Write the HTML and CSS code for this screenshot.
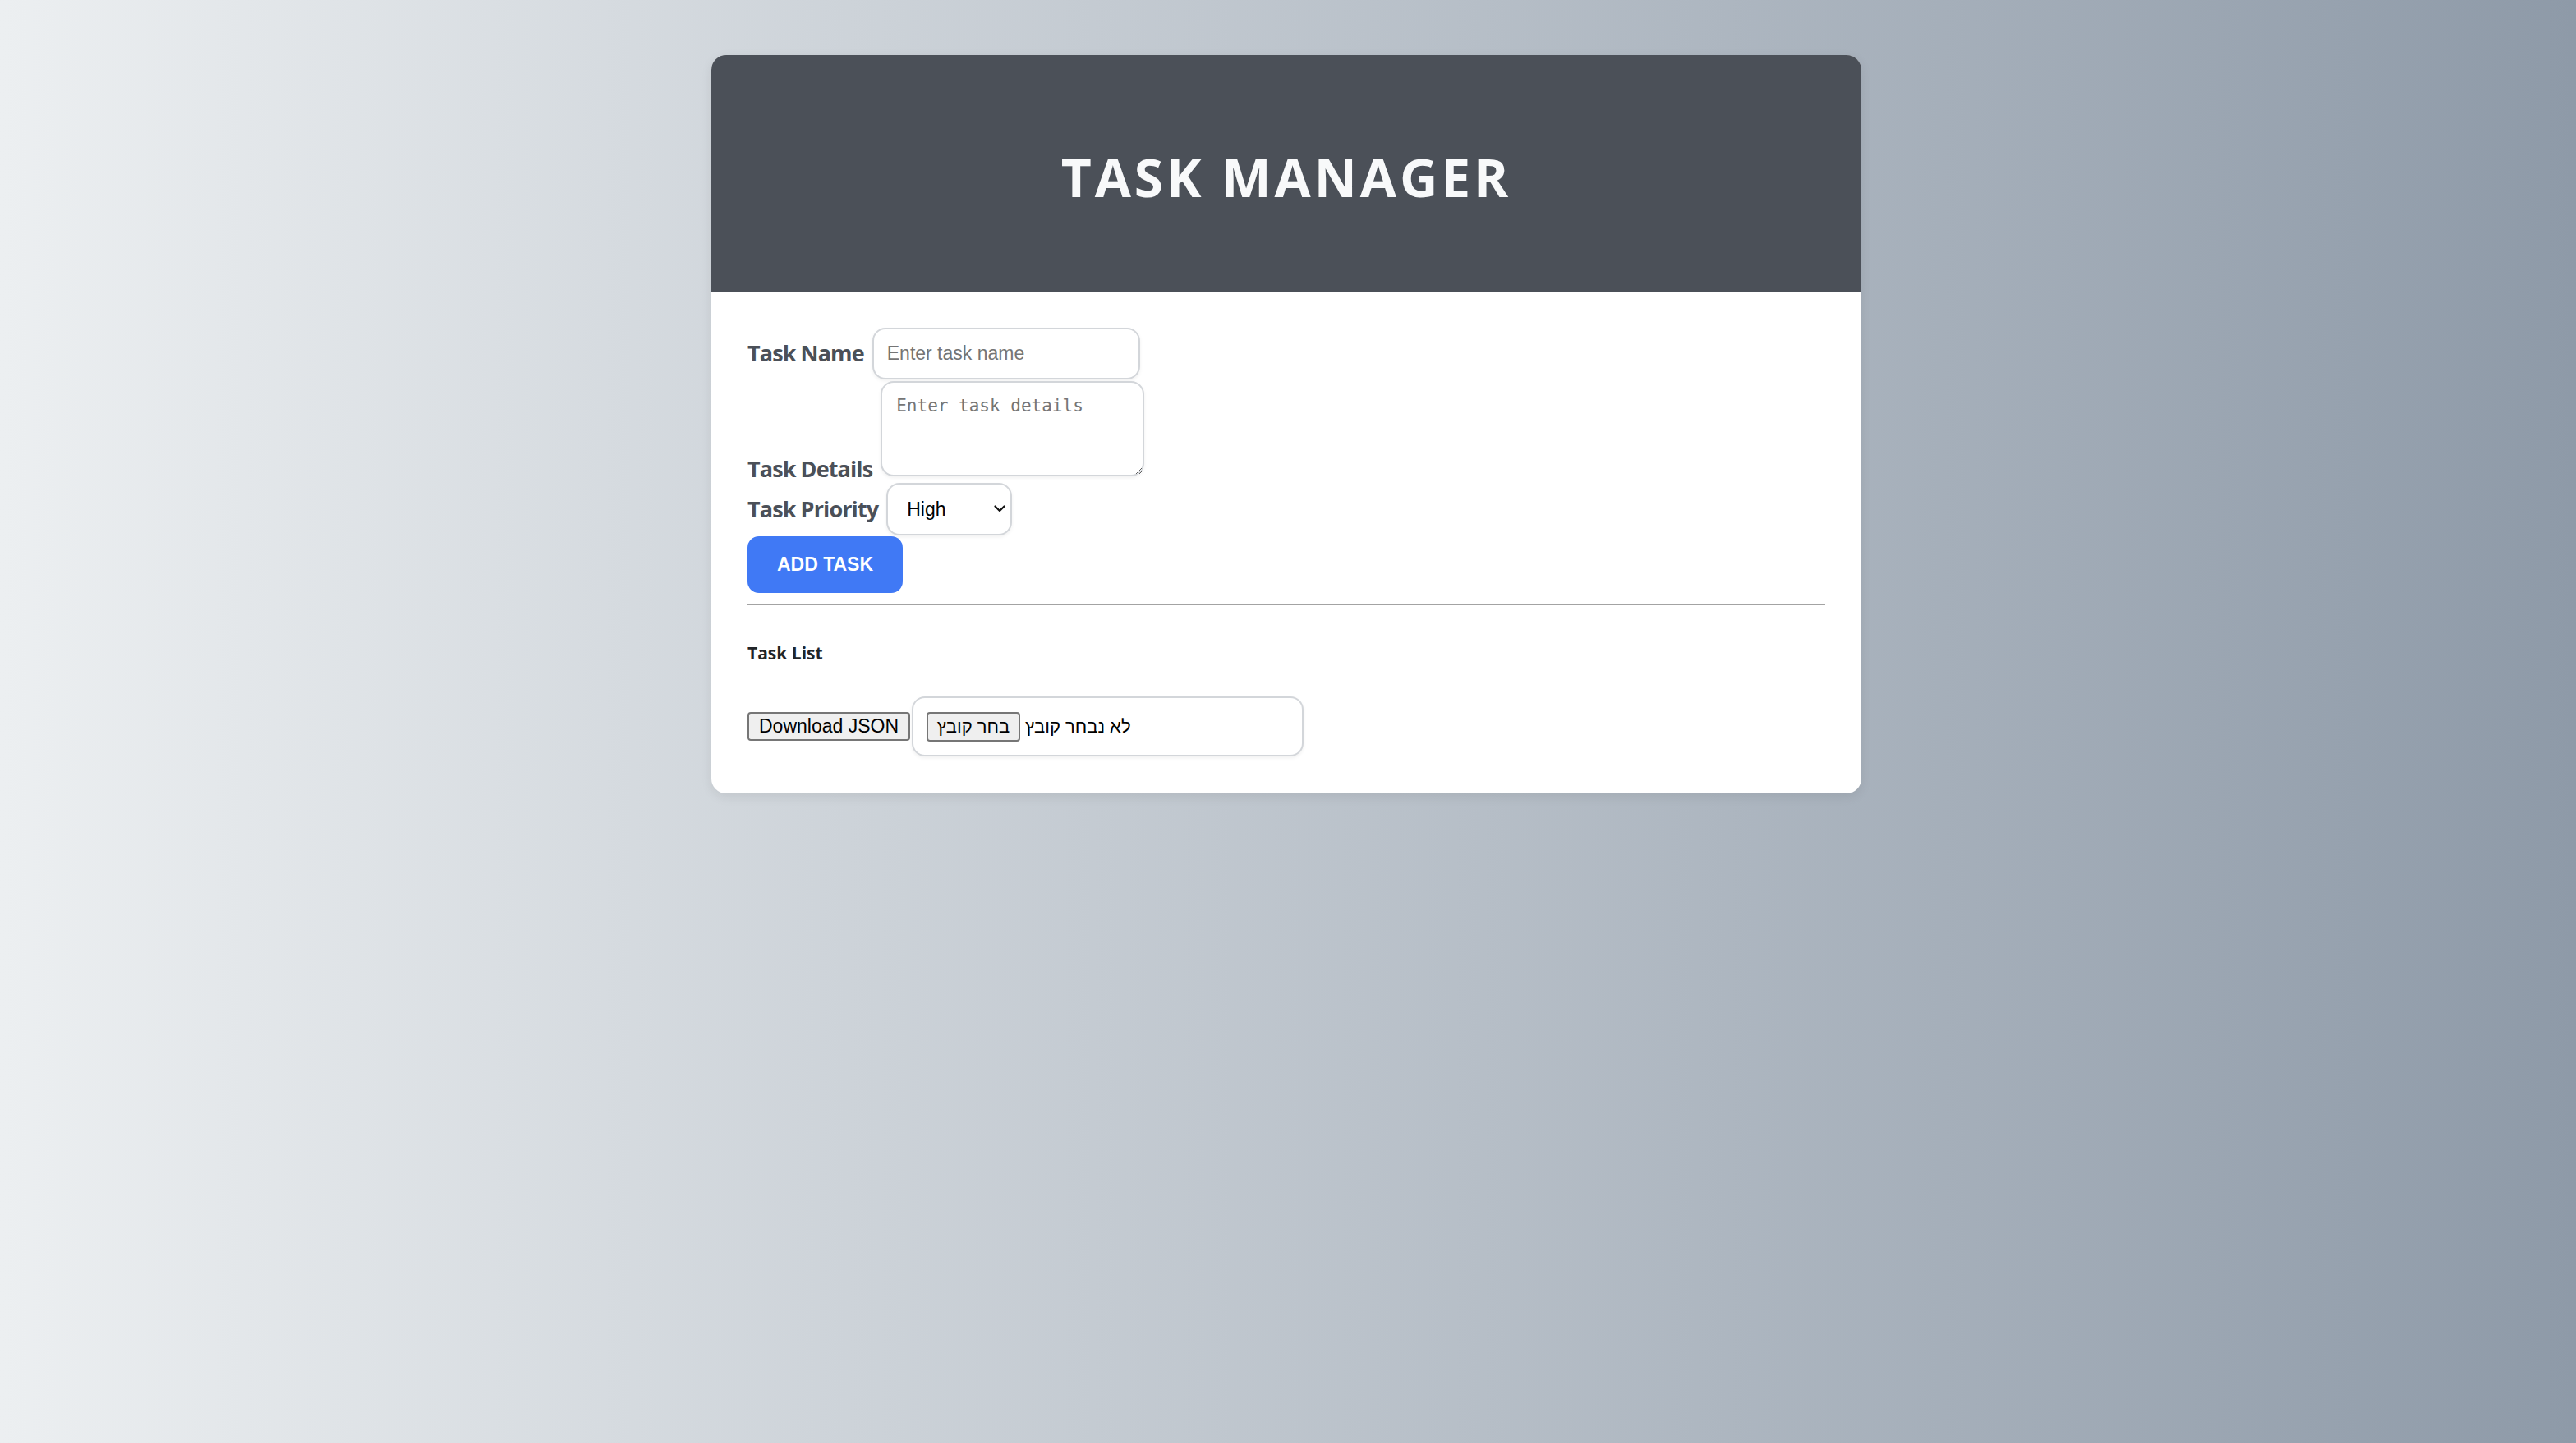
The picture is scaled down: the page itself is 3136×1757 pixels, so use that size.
FILE: index.html
```html
<!DOCTYPE html>
<html lang="en">
<head>
<meta charset="utf-8">
<title>Task Manager</title>
<link rel="stylesheet" href="styles.css">
</head>
<body>
<div class="card">
  <header class="card-header">
    <h1 class="title">TASK MANAGER</h1>
  </header>
  <main class="card-body">
    <div class="row row-name">
      <label class="label" for="name">Task Name</label>
      <input class="field field-name" id="name" type="text" placeholder="Enter task name">
    </div>
    <div class="row row-details">
      <label class="label label-details" for="details">Task Details</label>
      <textarea class="field field-details" id="details" placeholder="Enter task details"></textarea>
    </div>
    <div class="row row-priority">
      <label class="label" for="priority">Task Priority</label>
      <span class="select-wrap">
        <select class="field field-priority" id="priority">
          <option>High</option>
          <option>Medium</option>
          <option>Low</option>
        </select>
        <svg class="chevron" width="14" height="9" viewBox="0 0 14 9" aria-hidden="true">
          <path d="M1.5 1.5 L7 7 L12.5 1.5" fill="none" stroke="#111" stroke-width="2.2" stroke-linecap="round" stroke-linejoin="round"/>
        </svg>
      </span>
    </div>
    <button class="add-btn" type="button">ADD TASK</button>
    <hr class="divider">
    <h3 class="list-title">Task List</h3>
    <div class="io-row">
      <button class="sys-btn" type="button">Download JSON</button>
      <div class="file-box">
        <span class="sys-btn file-btn">בחר קובץ</span>
        <span class="file-text">לא נבחר קובץ</span>
      </div>
    </div>
  </main>
</div>
</body>
</html>
```

FILE: styles.css
```css
html, body {
  margin: 0;
  padding: 0;
}

body {
  min-height: 1757px;
  background: linear-gradient(to right, #eceff1 0%, #8e9aa8 100%);
  font-family: "Open Sans", "Noto Sans", sans-serif;
}

.card {
  width: 1400px;
  margin: 67px 0 0 calc(50% - 702px);
  background: #ffffff;
  border-radius: 18px;
  overflow: hidden;
  box-shadow: 0 4px 14px rgba(0, 0, 0, 0.08);
}

.card-header {
  height: 288px;
  box-sizing: border-box;
  padding-top: 10px;
  background: #4b5058;
  display: flex;
  align-items: center;
  justify-content: center;
}

.title {
  margin: 0;
  font-family: "Open Sans", sans-serif;
  font-weight: 700;
  font-size: 64px;
  line-height: 1;
  letter-spacing: 4px;
  color: #f8f9fa;
}

.card-body {
  padding: 44px 44px 45px 44px;
}

.row {
  display: flex;
  align-items: baseline;
  gap: 10px;
}

.row-details {
  margin-top: 2px;
  align-items: flex-end;
}

.row-priority {
  margin-top: 8px;
}

.label {
  font-family: "Open Sans", sans-serif;
  font-weight: 700;
  font-size: 27px;
  letter-spacing: -0.9px;
  color: #4b5058;
  position: relative;
  top: 2px;
}

.label-details {
  line-height: 28px;
  top: 5px;
}

.field {
  box-sizing: border-box;
  border: 2px solid #d3d6da;
  border-radius: 16px;
  background: #fff;
  box-shadow: 0 2px 4px rgba(0, 0, 0, 0.06);
  font-family: "Liberation Sans", Arial, sans-serif;
  font-size: 23px;
  color: #000;
  outline: none;
}

.field::placeholder {
  color: #757575;
}

.field-name {
  width: 326px;
  height: 63px;
  padding: 0 16px;
}

.field-details {
  width: 321px;
  height: 116px;
  padding: 16px 17px;
  font-family: "DejaVu Sans Mono", "Liberation Mono", monospace;
  font-size: 21px;
  resize: vertical;
  display: block;
}

.select-wrap {
  position: relative;
  display: inline-flex;
}

.field-priority {
  appearance: none;
  -webkit-appearance: none;
  width: 153px;
  height: 64px;
  padding: 0 30px 0 23px;
}

.chevron {
  position: absolute;
  right: 8px;
  top: 27px;
  pointer-events: none;
}

.add-btn {
  display: block;
  margin-top: 1px;
  width: 189px;
  height: 69px;
  border: none;
  border-radius: 14px;
  background: #4079f5;
  color: #fff;
  font-family: "Liberation Sans", Arial, sans-serif;
  font-weight: 700;
  font-size: 23px;
  padding: 0;
}

.divider {
  margin: 13px 0 0;
  border: 0;
  border-top: 2px solid #a3a3a3;
  height: 0;
}

.list-title {
  margin: 48px 0 0;
  font-family: "Open Sans", sans-serif;
  font-weight: 700;
  font-size: 21px;
  line-height: 21px;
  letter-spacing: 0;
  color: #212529;
}

.io-row {
  margin-top: 42px;
  display: flex;
  align-items: center;
  gap: 2px;
}

.sys-btn {
  box-sizing: border-box;
  display: inline-flex;
  align-items: center;
  justify-content: center;
  height: 35px;
  padding: 0 10px;
  background: #efefef;
  border: 2px solid #767676;
  border-radius: 4px;
  font-family: "Liberation Sans", Arial, sans-serif;
  font-size: 23px;
  color: #000;
}

.io-row > .sys-btn {
  width: 198px;
}

.file-box {
  box-sizing: border-box;
  width: 477px;
  height: 73px;
  padding: 0 16px;
  display: flex;
  align-items: center;
  gap: 6px;
  border: 2px solid #d3d6da;
  border-radius: 16px;
  background: #fff;
  box-shadow: 0 2px 4px rgba(0, 0, 0, 0.06);
}

.file-btn {
  width: 114px;
  height: 36px;
  padding: 0;
  font-size: 22px;
}

.file-text {
  font-family: "Liberation Sans", Arial, sans-serif;
  font-size: 22px;
  color: #000;
}
```
